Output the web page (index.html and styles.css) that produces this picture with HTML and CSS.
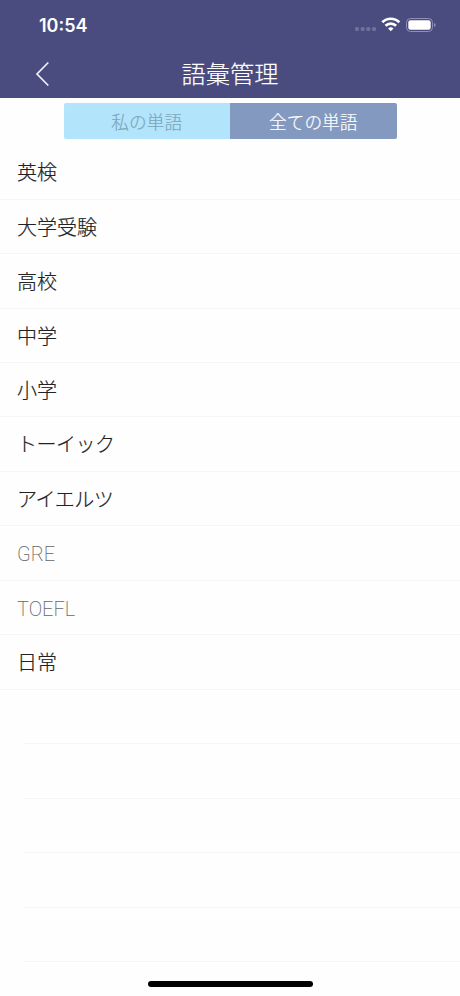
FILE: index.html
```html
<!DOCTYPE html>
<html lang="ja">
<head>
<meta charset="utf-8">
<title>語彙管理</title>
<link rel="stylesheet" href="styles.css">
</head>
<body>
<header class="header">
  <div class="status">
    <span class="time">10:54</span>
    <svg class="status-icons" width="82" height="18" viewBox="0 0 82 18">
      <g fill="#6f709e">
        <rect x="1" y="11" width="4" height="4" rx="1.5"/>
        <rect x="6.700" y="11" width="4" height="4" rx="1.5"/>
        <rect x="12.300" y="11" width="4" height="4" rx="1.5"/>
        <rect x="18" y="11" width="4" height="4" rx="1.5"/>
      </g>
      <g fill="none" stroke="#fff" stroke-width="2.700">
        <path d="M28.300 6.300a12 12 0 0 1 17 0"/>
        <path d="M31.500 9.800a7.600 7.600 0 0 1 10.600 0"/>
      </g>
      <path d="M34.100 12.400a4 4 0 0 1 5.400 0L36.800 15.200z" fill="#fff"/>
      <rect x="52.500" y="2.500" width="26" height="13" rx="4" fill="none" stroke="#8f90b8"/>
      <rect x="54.300" y="4.300" width="22.400" height="9.400" rx="2.300" fill="#fff"/>
      <path d="M80 7v4q1.700-.6 1.700-2T80 7z" fill="#8f90b8"/>
    </svg>
  </div>
  <div class="nav">
    <svg class="back" width="16" height="26" viewBox="0 0 16 26"><path d="M13.300 1.500 2 13l11.300 11.500" fill="none" stroke="#f1f1fa" stroke-width="1.700"/></svg>
    <h1 class="title">語彙管理</h1>
  </div>
</header>
<div class="tabs">
  <div class="tab tab-mine">私の単語</div>
  <div class="tab tab-all">全ての単語</div>
</div>
<ul class="list">
  <li class="row">英検</li>
  <li class="row">大学受験</li>
  <li class="row">高校</li>
  <li class="row">中学</li>
  <li class="row">小学</li>
  <li class="row kana">トーイック</li>
  <li class="row kana">アイエルツ</li>
  <li class="row latin">GRE</li>
  <li class="row latin">TOEFL</li>
  <li class="row">日常</li>
  <li class="row empty"></li>
  <li class="row empty"></li>
  <li class="row empty"></li>
  <li class="row empty"></li>
  <li class="row empty"></li>
</ul>
<div class="home"></div>
</body>
</html>
```
FILE: styles.css
```css
* { box-sizing: border-box; }
body {
  margin: 0;
  width: 460px;
  height: 996px;
  overflow: hidden;
  display: flex;
  flex-direction: column;
  background: #fefefe;
  font-family: "Noto Sans CJK JP", sans-serif;
  font-weight: 300;
  color: #222;
}
.header {
  height: 98px;
  flex: none;
  background: #4a4b7f;
  color: #fff;
}
.status {
  display: flex;
  justify-content: space-between;
  align-items: center;
  height: 50px;
  padding: 0 24px 0 39px;
}
.time {
  padding-top: 2px;
  font: 600 18px/22px Inter, sans-serif;
}
.nav {
  display: grid;
  grid-template-columns: 60px 1fr 60px;
  align-items: center;
  height: 47px;
}
.back { margin-left: 35px; }
.title {
  margin: 0 0 2px;
  font-size: 24.200px;
  font-weight: 300;
  line-height: 36px;
  text-align: center;
  -webkit-text-stroke: 0.2px;
}
.tabs {
  display: flex;
  flex: none;
  width: 333px;
  height: 36px;
  margin: 5px 0 0 63.500px;
  border-radius: 2px;
  overflow: hidden;
}
.tab {
  flex: 1;
  font-size: 17.700px;
  line-height: 36px;
  text-align: center;
  -webkit-text-stroke: 0.2px;
}
.tab-mine { background: #b2e5fb; color: #7fa5bd; }
.tab-all { background: #8399c0; color: #fff; }
.list {
  flex: none;
  list-style: none;
  margin: 6.200px 0 0;
  padding: 0;
}
.row {
  height: 54.460px;
  padding-left: 17px;
  border-bottom: 1px solid #f6f6f6;
  font-size: 20px;
  line-height: 54.500px;
  -webkit-text-stroke: 0.2px;
}
.kana {
  letter-spacing: -0.500px;
}
.latin {
  font-family: Roboto, sans-serif;
  font-size: 20px;
  font-weight: 200;
  line-height: 56px;
  color: #666;
  -webkit-text-stroke: 0;
}
.empty { margin-left: 24px; }
.home {
  flex: none;
  width: 165px;
  height: 6px;
  margin: 18.800px auto 0;
  border-radius: 3px;
  background: #000;
}
```
